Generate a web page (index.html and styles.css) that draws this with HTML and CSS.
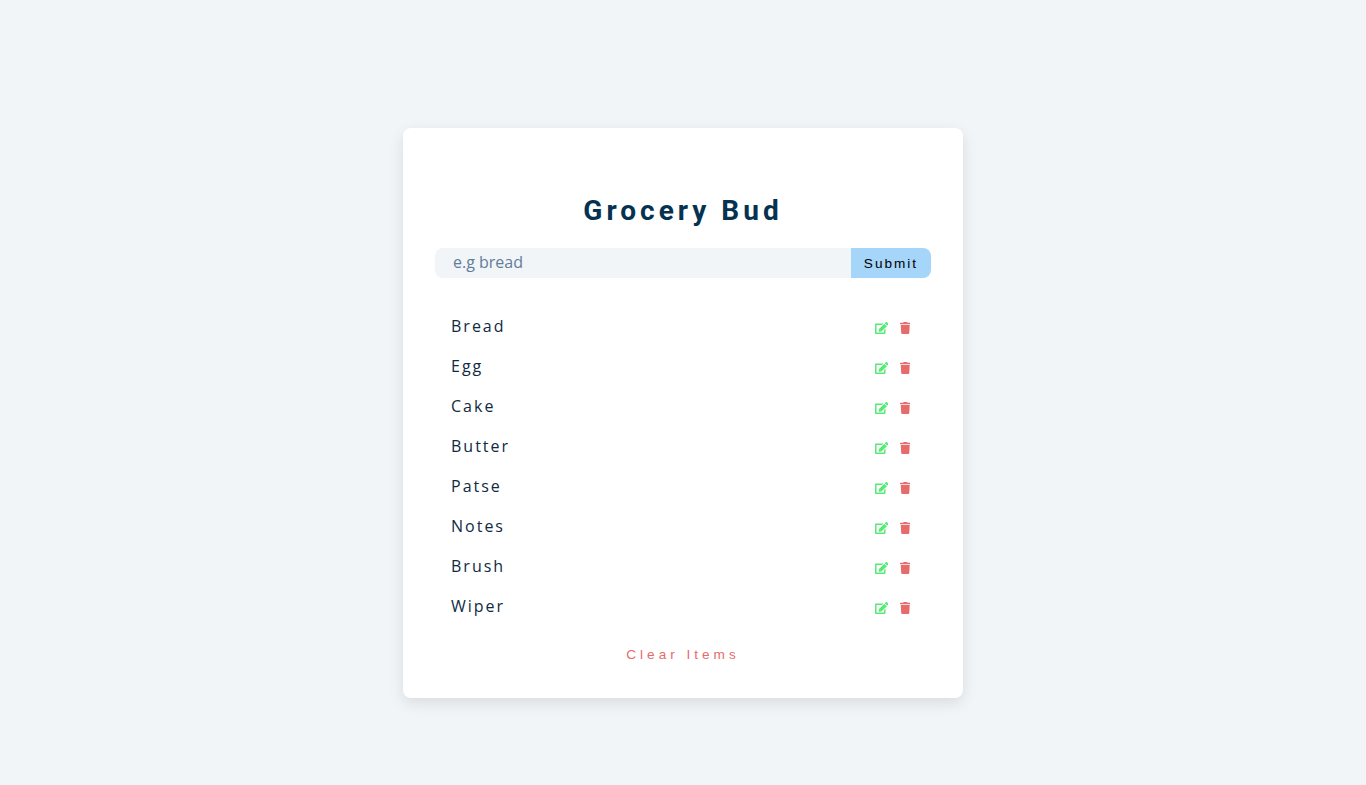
FILE: index.html
```html
<!DOCTYPE html>
<html>
<head>
  <meta charset="UTF-8">
  <title>Grocery Bud</title>
  <link rel="stylesheet" href="styles.css">
</head>
<body>
  <section class="card">
    <form class="grocery-form">
      <h3>Grocery Bud</h3>
      <div class="form-control">
        <input type="text" class="grocery" placeholder="e.g bread">
        <button type="button" class="submit-btn">Submit</button>
      </div>
    </form>
    <div class="grocery-list">
      <article class="grocery-item">
        <p class="title">Bread</p>
        <div class="btn-container">
          <button type="button" class="edit-btn"><svg class="icon-edit" viewBox="0 0 576 512"><path d="M402.6 83.2l90.2 90.2c3.8 3.8 3.8 10 0 13.8L274.4 405.6l-92.8 10.3c-12.4 1.4-22.9-9.1-21.5-21.5l10.3-92.8L388.8 83.2c3.8-3.8 10-3.8 13.8 0zm162-22.9l-48.8-48.8c-15.2-15.2-39.9-15.2-55.2 0l-35.4 35.4c-3.8 3.8-3.8 10 0 13.8l90.2 90.2c3.8 3.8 10 3.8 13.8 0l35.4-35.4c15.2-15.3 15.2-40 0-55.2zM384 346.2V448H64V128h229.8c3.2 0 6.2-1.3 8.5-3.5l40-40c7.6-7.6 2.2-20.5-8.5-20.5H48C21.5 64 0 85.5 0 112v352c0 26.5 21.5 48 48 48h352c26.5 0 48-21.5 48-48V306.2c0-10.7-12.9-16-20.5-8.5l-40 40c-2.2 2.3-3.5 5.3-3.5 8.5z"/></svg></button>
          <button type="button" class="delete-btn"><svg class="icon-trash" viewBox="0 0 448 512"><path d="M432 32H312l-9.4-18.7A24 24 0 0 0 281.1 0H166.8a23.72 23.72 0 0 0-21.4 13.3L136 32H16A16 16 0 0 0 0 48v32a16 16 0 0 0 16 16h416a16 16 0 0 0 16-16V48a16 16 0 0 0-16-16zM53.2 467a48 48 0 0 0 47.9 45h245.8a48 48 0 0 0 47.9-45L416 128H32z"/></svg></button>
        </div>
      </article>
      <article class="grocery-item">
        <p class="title">Egg</p>
        <div class="btn-container">
          <button type="button" class="edit-btn"><svg class="icon-edit" viewBox="0 0 576 512"><path d="M402.6 83.2l90.2 90.2c3.8 3.8 3.8 10 0 13.8L274.4 405.6l-92.8 10.3c-12.4 1.4-22.9-9.1-21.5-21.5l10.3-92.8L388.8 83.2c3.8-3.8 10-3.8 13.8 0zm162-22.9l-48.8-48.8c-15.2-15.2-39.9-15.2-55.2 0l-35.4 35.4c-3.8 3.8-3.8 10 0 13.8l90.2 90.2c3.8 3.8 10 3.8 13.8 0l35.4-35.4c15.2-15.3 15.2-40 0-55.2zM384 346.2V448H64V128h229.8c3.2 0 6.2-1.3 8.5-3.5l40-40c7.6-7.6 2.2-20.5-8.5-20.5H48C21.5 64 0 85.5 0 112v352c0 26.5 21.5 48 48 48h352c26.5 0 48-21.5 48-48V306.2c0-10.7-12.9-16-20.5-8.5l-40 40c-2.2 2.3-3.5 5.3-3.5 8.5z"/></svg></button>
          <button type="button" class="delete-btn"><svg class="icon-trash" viewBox="0 0 448 512"><path d="M432 32H312l-9.4-18.7A24 24 0 0 0 281.1 0H166.8a23.72 23.72 0 0 0-21.4 13.3L136 32H16A16 16 0 0 0 0 48v32a16 16 0 0 0 16 16h416a16 16 0 0 0 16-16V48a16 16 0 0 0-16-16zM53.2 467a48 48 0 0 0 47.9 45h245.8a48 48 0 0 0 47.9-45L416 128H32z"/></svg></button>
        </div>
      </article>
      <article class="grocery-item">
        <p class="title">Cake</p>
        <div class="btn-container">
          <button type="button" class="edit-btn"><svg class="icon-edit" viewBox="0 0 576 512"><path d="M402.6 83.2l90.2 90.2c3.8 3.8 3.8 10 0 13.8L274.4 405.6l-92.8 10.3c-12.4 1.4-22.9-9.1-21.5-21.5l10.3-92.8L388.8 83.2c3.8-3.8 10-3.8 13.8 0zm162-22.9l-48.8-48.8c-15.2-15.2-39.9-15.2-55.2 0l-35.4 35.4c-3.8 3.8-3.8 10 0 13.8l90.2 90.2c3.8 3.8 10 3.8 13.8 0l35.4-35.4c15.2-15.3 15.2-40 0-55.2zM384 346.2V448H64V128h229.8c3.2 0 6.2-1.3 8.5-3.5l40-40c7.6-7.6 2.2-20.5-8.5-20.5H48C21.5 64 0 85.5 0 112v352c0 26.5 21.5 48 48 48h352c26.5 0 48-21.5 48-48V306.2c0-10.7-12.9-16-20.5-8.5l-40 40c-2.2 2.3-3.5 5.3-3.5 8.5z"/></svg></button>
          <button type="button" class="delete-btn"><svg class="icon-trash" viewBox="0 0 448 512"><path d="M432 32H312l-9.4-18.7A24 24 0 0 0 281.1 0H166.8a23.72 23.72 0 0 0-21.4 13.3L136 32H16A16 16 0 0 0 0 48v32a16 16 0 0 0 16 16h416a16 16 0 0 0 16-16V48a16 16 0 0 0-16-16zM53.2 467a48 48 0 0 0 47.9 45h245.8a48 48 0 0 0 47.9-45L416 128H32z"/></svg></button>
        </div>
      </article>
      <article class="grocery-item">
        <p class="title">Butter</p>
        <div class="btn-container">
          <button type="button" class="edit-btn"><svg class="icon-edit" viewBox="0 0 576 512"><path d="M402.6 83.2l90.2 90.2c3.8 3.8 3.8 10 0 13.8L274.4 405.6l-92.8 10.3c-12.4 1.4-22.9-9.1-21.5-21.5l10.3-92.8L388.8 83.2c3.8-3.8 10-3.8 13.8 0zm162-22.9l-48.8-48.8c-15.2-15.2-39.9-15.2-55.2 0l-35.4 35.4c-3.8 3.8-3.8 10 0 13.8l90.2 90.2c3.8 3.8 10 3.8 13.8 0l35.4-35.4c15.2-15.3 15.2-40 0-55.2zM384 346.2V448H64V128h229.8c3.2 0 6.2-1.3 8.5-3.5l40-40c7.6-7.6 2.2-20.5-8.5-20.5H48C21.5 64 0 85.5 0 112v352c0 26.5 21.5 48 48 48h352c26.5 0 48-21.5 48-48V306.2c0-10.7-12.9-16-20.5-8.5l-40 40c-2.2 2.3-3.5 5.3-3.5 8.5z"/></svg></button>
          <button type="button" class="delete-btn"><svg class="icon-trash" viewBox="0 0 448 512"><path d="M432 32H312l-9.4-18.7A24 24 0 0 0 281.1 0H166.8a23.72 23.72 0 0 0-21.4 13.3L136 32H16A16 16 0 0 0 0 48v32a16 16 0 0 0 16 16h416a16 16 0 0 0 16-16V48a16 16 0 0 0-16-16zM53.2 467a48 48 0 0 0 47.9 45h245.8a48 48 0 0 0 47.9-45L416 128H32z"/></svg></button>
        </div>
      </article>
      <article class="grocery-item">
        <p class="title">Patse</p>
        <div class="btn-container">
          <button type="button" class="edit-btn"><svg class="icon-edit" viewBox="0 0 576 512"><path d="M402.6 83.2l90.2 90.2c3.8 3.8 3.8 10 0 13.8L274.4 405.6l-92.8 10.3c-12.4 1.4-22.9-9.1-21.5-21.5l10.3-92.8L388.8 83.2c3.8-3.8 10-3.8 13.8 0zm162-22.9l-48.8-48.8c-15.2-15.2-39.9-15.2-55.2 0l-35.4 35.4c-3.8 3.8-3.8 10 0 13.8l90.2 90.2c3.8 3.8 10 3.8 13.8 0l35.4-35.4c15.2-15.3 15.2-40 0-55.2zM384 346.2V448H64V128h229.8c3.2 0 6.2-1.3 8.5-3.5l40-40c7.6-7.6 2.2-20.5-8.5-20.5H48C21.5 64 0 85.5 0 112v352c0 26.5 21.5 48 48 48h352c26.5 0 48-21.5 48-48V306.2c0-10.7-12.9-16-20.5-8.5l-40 40c-2.2 2.3-3.5 5.3-3.5 8.5z"/></svg></button>
          <button type="button" class="delete-btn"><svg class="icon-trash" viewBox="0 0 448 512"><path d="M432 32H312l-9.4-18.7A24 24 0 0 0 281.1 0H166.8a23.72 23.72 0 0 0-21.4 13.3L136 32H16A16 16 0 0 0 0 48v32a16 16 0 0 0 16 16h416a16 16 0 0 0 16-16V48a16 16 0 0 0-16-16zM53.2 467a48 48 0 0 0 47.9 45h245.8a48 48 0 0 0 47.9-45L416 128H32z"/></svg></button>
        </div>
      </article>
      <article class="grocery-item">
        <p class="title">Notes</p>
        <div class="btn-container">
          <button type="button" class="edit-btn"><svg class="icon-edit" viewBox="0 0 576 512"><path d="M402.6 83.2l90.2 90.2c3.8 3.8 3.8 10 0 13.8L274.4 405.6l-92.8 10.3c-12.4 1.4-22.9-9.1-21.5-21.5l10.3-92.8L388.8 83.2c3.8-3.8 10-3.8 13.8 0zm162-22.9l-48.8-48.8c-15.2-15.2-39.9-15.2-55.2 0l-35.4 35.4c-3.8 3.8-3.8 10 0 13.8l90.2 90.2c3.8 3.8 10 3.8 13.8 0l35.4-35.4c15.2-15.3 15.2-40 0-55.2zM384 346.2V448H64V128h229.8c3.2 0 6.2-1.3 8.5-3.5l40-40c7.6-7.6 2.2-20.5-8.5-20.5H48C21.5 64 0 85.5 0 112v352c0 26.5 21.5 48 48 48h352c26.5 0 48-21.5 48-48V306.2c0-10.7-12.9-16-20.5-8.5l-40 40c-2.2 2.3-3.5 5.3-3.5 8.5z"/></svg></button>
          <button type="button" class="delete-btn"><svg class="icon-trash" viewBox="0 0 448 512"><path d="M432 32H312l-9.4-18.7A24 24 0 0 0 281.1 0H166.8a23.72 23.72 0 0 0-21.4 13.3L136 32H16A16 16 0 0 0 0 48v32a16 16 0 0 0 16 16h416a16 16 0 0 0 16-16V48a16 16 0 0 0-16-16zM53.2 467a48 48 0 0 0 47.9 45h245.8a48 48 0 0 0 47.9-45L416 128H32z"/></svg></button>
        </div>
      </article>
      <article class="grocery-item">
        <p class="title">Brush</p>
        <div class="btn-container">
          <button type="button" class="edit-btn"><svg class="icon-edit" viewBox="0 0 576 512"><path d="M402.6 83.2l90.2 90.2c3.8 3.8 3.8 10 0 13.8L274.4 405.6l-92.8 10.3c-12.4 1.4-22.9-9.1-21.5-21.5l10.3-92.8L388.8 83.2c3.8-3.8 10-3.8 13.8 0zm162-22.9l-48.8-48.8c-15.2-15.2-39.9-15.2-55.2 0l-35.4 35.4c-3.8 3.8-3.8 10 0 13.8l90.2 90.2c3.8 3.8 10 3.8 13.8 0l35.4-35.4c15.2-15.3 15.2-40 0-55.2zM384 346.2V448H64V128h229.8c3.2 0 6.2-1.3 8.5-3.5l40-40c7.6-7.6 2.2-20.5-8.5-20.5H48C21.5 64 0 85.5 0 112v352c0 26.5 21.5 48 48 48h352c26.5 0 48-21.5 48-48V306.2c0-10.7-12.9-16-20.5-8.5l-40 40c-2.2 2.3-3.5 5.3-3.5 8.5z"/></svg></button>
          <button type="button" class="delete-btn"><svg class="icon-trash" viewBox="0 0 448 512"><path d="M432 32H312l-9.4-18.7A24 24 0 0 0 281.1 0H166.8a23.72 23.72 0 0 0-21.4 13.3L136 32H16A16 16 0 0 0 0 48v32a16 16 0 0 0 16 16h416a16 16 0 0 0 16-16V48a16 16 0 0 0-16-16zM53.2 467a48 48 0 0 0 47.9 45h245.8a48 48 0 0 0 47.9-45L416 128H32z"/></svg></button>
        </div>
      </article>
      <article class="grocery-item">
        <p class="title">Wiper</p>
        <div class="btn-container">
          <button type="button" class="edit-btn"><svg class="icon-edit" viewBox="0 0 576 512"><path d="M402.6 83.2l90.2 90.2c3.8 3.8 3.8 10 0 13.8L274.4 405.6l-92.8 10.3c-12.4 1.4-22.9-9.1-21.5-21.5l10.3-92.8L388.8 83.2c3.8-3.8 10-3.8 13.8 0zm162-22.9l-48.8-48.8c-15.2-15.2-39.9-15.2-55.2 0l-35.4 35.4c-3.8 3.8-3.8 10 0 13.8l90.2 90.2c3.8 3.8 10 3.8 13.8 0l35.4-35.4c15.2-15.3 15.2-40 0-55.2zM384 346.2V448H64V128h229.8c3.2 0 6.2-1.3 8.5-3.5l40-40c7.6-7.6 2.2-20.5-8.5-20.5H48C21.5 64 0 85.5 0 112v352c0 26.5 21.5 48 48 48h352c26.5 0 48-21.5 48-48V306.2c0-10.7-12.9-16-20.5-8.5l-40 40c-2.2 2.3-3.5 5.3-3.5 8.5z"/></svg></button>
          <button type="button" class="delete-btn"><svg class="icon-trash" viewBox="0 0 448 512"><path d="M432 32H312l-9.4-18.7A24 24 0 0 0 281.1 0H166.8a23.72 23.72 0 0 0-21.4 13.3L136 32H16A16 16 0 0 0 0 48v32a16 16 0 0 0 16 16h416a16 16 0 0 0 16-16V48a16 16 0 0 0-16-16zM53.2 467a48 48 0 0 0 47.9 45h245.8a48 48 0 0 0 47.9-45L416 128H32z"/></svg></button>
        </div>
      </article>
    </div>
    <button type="button" class="clear-btn">Clear Items</button>
  </section>
</body>
</html>
```
FILE: styles.css
```css
* {
  margin: 0;
  padding: 0;
  box-sizing: border-box;
}

body {
  min-height: 100vh;
  padding-top: 128px;
  font-family: "Open Sans", sans-serif;
  background-color: #f1f5f8;
  color: #102a42;
  font-size: 16px;
  line-height: 1.5;
}

.card {
  width: 560px;
  height: 570px;
  margin: 0 auto;
  padding: 32px;
  background-color: #fff;
  border-radius: 8px;
  box-shadow: 0 5px 15px rgba(0, 0, 0, 0.1);
}

h3 {
  font-family: Roboto, sans-serif;
  font-size: 28px;
  font-weight: 700;
  line-height: 35px;
  letter-spacing: 4px;
  color: #063251;
  text-align: center;
  margin-top: 33px;
  margin-bottom: 20px;
}

.form-control {
  display: flex;
  justify-content: center;
}

.grocery {
  flex: 1 0 auto;
  height: 30px;
  padding: 3px 4px 5px 18px;
  background-color: #f1f5f8;
  border: none;
  border-top-left-radius: 8px;
  border-bottom-left-radius: 8px;
  font-family: "Open Sans", sans-serif;
  font-size: 16px;
  outline: none;
}

.grocery::placeholder {
  color: #617d98;
}

.submit-btn {
  width: 80px;
  height: 30px;
  background-color: #a5d5f8;
  border: none;
  border-top-right-radius: 8px;
  border-bottom-right-radius: 8px;
  font-family: "Liberation Sans", sans-serif;
  font-size: 13.6px;
  letter-spacing: 2px;
  color: #000;
}

.grocery-list {
  margin-top: 28px;
}

.grocery-item {
  display: flex;
  align-items: center;
  justify-content: space-between;
  height: 40px;
  padding: 0 16px;
}

.title {
  letter-spacing: 2px;
  color: #102a42;
}

.btn-container {
  display: flex;
  align-items: center;
  padding-top: 3px;
}

.edit-btn,
.delete-btn {
  display: flex;
  background: transparent;
  border: none;
}

.edit-btn {
  fill: #55ea75;
  margin-right: 11.5px;
}

.delete-btn {
  fill: #e66b6b;
  margin-right: 5px;
}

.icon-edit {
  width: 13.5px;
  height: 12px;
}

.icon-trash {
  width: 10.5px;
  height: 12px;
}

.clear-btn {
  display: block;
  margin: 21px auto 0;
  background: transparent;
  border: none;
  font-family: "Liberation Sans", sans-serif;
  font-size: 13.6px;
  letter-spacing: 4px;
  color: #e66b6b;
}
```
